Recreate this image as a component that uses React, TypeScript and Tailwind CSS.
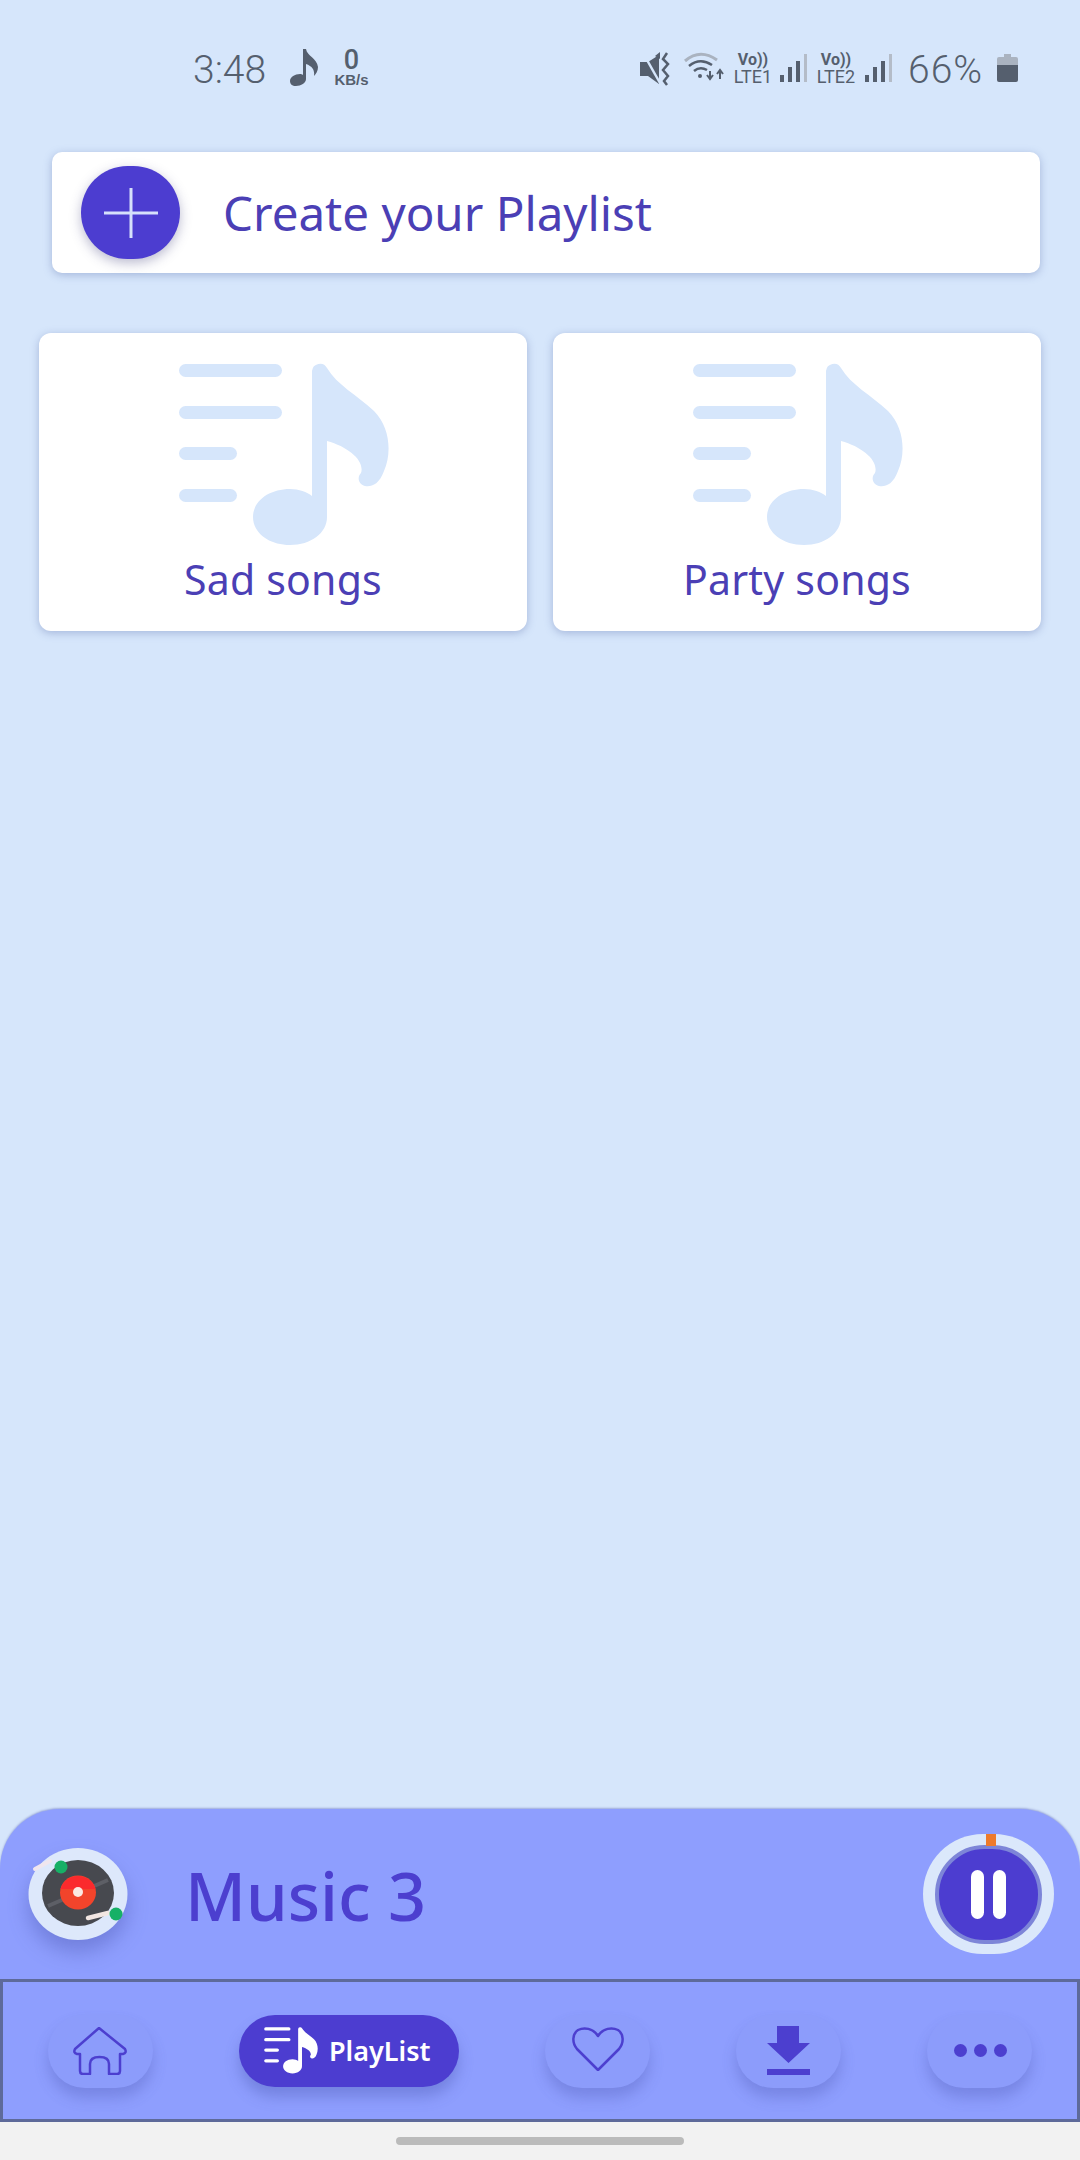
import React from 'react'

const PlaylistIcon = ({ className, fill }: { className: string; fill: string }) => (
  <svg viewBox="0 0 210 184" className={className} fill={fill}>
    <rect x="0" y="1" width="103" height="13" rx="6.5" />
    <rect x="0" y="43" width="103" height="13" rx="6.5" />
    <rect x="0" y="84" width="58" height="13" rx="6.5" />
    <rect x="0" y="126" width="58" height="13" rx="6.5" />
    <path d="M133 8 a8 8 0 0 1 15 -3 C158 22 178 32 195 48 C211 64 213 90 205 108 C200 122 192 124 186 123 C179 121 178 114 182 110 C186 98 170 84 148 78 L148 154 C148 170 132 182 111 182 C90 182 74 170 74 154 C74 138 90 126 111 126 C120 126 128 129 133 133 Z" />
  </svg>
)

const StatusBars = () => (
  <svg viewBox="0 0 28 28" className="w-[28px] h-[28px]">
    <rect x="0" y="21" width="4" height="7" fill="#555f6e" />
    <rect x="8" y="13" width="4" height="15" fill="#555f6e" />
    <rect x="16" y="7" width="4" height="21" fill="#555f6e" />
    <rect x="24" y="0" width="3" height="28" fill="#b4bcc8" />
  </svg>
)

const Lte = ({ label }: { label: string }) => (
  <div className="flex flex-col items-center leading-none text-[#555f6e] font-['Roboto',sans-serif] w-[40px]">
    <span className="text-[16px] font-bold h-[16px]">Vo))</span>
    <span className="text-[18px] font-normal">{label}</span>
  </div>
)

const Disc = () => (
  <svg viewBox="0 0 100 92" className="w-[100px] h-[92px] shrink-0 drop-shadow-[0_12px_10px_rgba(70,80,170,0.4)]">
    <ellipse cx="50" cy="46" rx="49.5" ry="46" fill="#dde8fb" />
    <path d="M7 21 L22 13" stroke="#f0e6ee" strokeWidth="4" strokeLinecap="round" />
    <ellipse cx="50" cy="45" rx="36" ry="33" fill="#47494f" />
    <path d="M20 58 L80 32" stroke="#5d5f66" strokeWidth="4" />
    <ellipse cx="50" cy="44.5" rx="18" ry="17" fill="#f2442b" />
    <path d="M32.5 41 A18 17 0 0 1 67.5 41 Z" fill="#fb2a2d" />
    <circle cx="50" cy="44" r="5" fill="#fbe9e2" />
    <path d="M60 70 L80 65" stroke="#f2e6e2" strokeWidth="4.5" strokeLinecap="round" />
    <circle cx="33" cy="19" r="6.5" fill="#17b066" />
    <circle cx="88" cy="66" r="6.5" fill="#17b066" />
  </svg>
)

const NavPill = ({ children }: { children: React.ReactNode }) => (
  <div className="w-[105px] h-[74px] rounded-[37px] bg-[#8c9cfb] flex items-center justify-center shadow-[0_10px_14px_rgba(70,80,170,0.3)]">
    {children}
  </div>
)

const SongCard = ({ title }: { title: string }) => (
  <div className="h-[298px] bg-white rounded-[12px] flex flex-col items-center pt-[30px] shadow-[0_2px_8px_rgba(90,110,170,0.4)]">
    <PlaylistIcon className="w-[210px] h-[184px] ml-[2px]" fill="#d6e6fb" />
    <span className="mt-[7px] text-[41px] leading-[50px] tracking-[0.2px] text-[#4b3fb5]">{title}</span>
  </div>
)

export default function App() {
  return (
    <div className="w-[1080px] h-[2160px] flex flex-col bg-[#d6e6fb] font-['Noto_Sans',sans-serif]">
      {/* status bar */}
      <div className="h-[152px] shrink-0 flex items-start pt-[46px] text-[#555f6e]">
        <span className="ml-[193px] w-[73px] mt-[2px] text-[39px] leading-[44px] font-light font-['Roboto',sans-serif]">3:48</span>
        <svg viewBox="0 0 28 38" className="ml-[24px] w-[28px] h-[38px] mt-[2px]" fill="#555f6e">
          <path d="M13 1 L16 1 C17 8 27 10 28 19 C28 23 26 26 24 28 C25 22 22 18 16 16 L16 31 C16 35 11 38 6 38 C2 38 0 36 0 33 C0 29 5 26 10 26 C11 26 12 26 13 27 Z" />
        </svg>
        <div className="ml-[15px] w-[37px] flex flex-col items-center leading-none mt-[2px]">
          <span className="text-[27px] h-[24px] leading-[24px] font-medium font-['Roboto',sans-serif]">0</span>
          <span className="text-[15px] font-bold font-['Liberation_Sans',sans-serif]">KB/s</span>
        </div>
        <svg viewBox="0 0 32 34" className="ml-[270px] w-[32px] h-[34px] mt-[6px]" fill="#555f6e">
          <path d="M0 10 L8 10 L19 3 L19 32 L8 24 L0 24 Z" />
          <path d="M3 1 L20 31" stroke="#d6e6fb" strokeWidth="2.5" />
          <path d="M20 7 L15 4 L20 0 Z" />
          <path d="M27 1 L23 7 L28 12 L23 18 L28 24 L24 29 L27 33" fill="none" stroke="#555f6e" strokeWidth="2.5" />
        </svg>
        <svg viewBox="0 0 42 30" className="ml-[12px] w-[42px] h-[30px] mt-[5px]" fill="none">
          <path d="M1 10 Q16 -3 33 9" stroke="#aab3c0" strokeWidth="3" />
          <path d="M5 15 Q16 6 28 14" stroke="#555f6e" strokeWidth="2.5" />
          <path d="M10 20 Q16 15 23 19" stroke="#555f6e" strokeWidth="2.5" />
          <circle cx="16" cy="25" r="2" fill="#555f6e" />
          <path d="M26 20 L26 27 M23 24 L26 28 L29 24 M36 28 L36 20 M33 23 L36 19 L39 23" stroke="#555f6e" strokeWidth="2" />
        </svg>
        <div className="ml-[7px] mt-[6px]"><Lte label="LTE1" /></div>
        <div className="ml-[7px] mt-[8px]"><StatusBars /></div>
        <div className="ml-[8px] mt-[6px]"><Lte label="LTE2" /></div>
        <div className="ml-[9px] mt-[8px]"><StatusBars /></div>
        <span className="ml-[15px] w-[77px] mt-[2px] text-[39px] leading-[44px] font-light tracking-[1px] font-['Roboto',sans-serif]">66%</span>
        <svg viewBox="0 0 21 28" className="ml-[12px] w-[21px] h-[28px] mt-[8px]">
          <path d="M7 0 L14 0 L14 3 L19 3 Q21 3 21 5 L21 11 L0 11 L0 5 Q0 3 2 3 L7 3 Z" fill="#aab3c0" />
          <path d="M0 11 L21 11 L21 26 Q21 28 19 28 L2 28 Q0 28 0 26 Z" fill="#555f6e" />
        </svg>
      </div>

      {/* create playlist */}
      <div className="ml-[52px] w-[988px] h-[121px] shrink-0 bg-white rounded-[10px] flex items-center pl-[29px] shadow-[0_2px_8px_rgba(90,110,170,0.4)]">
        <div className="w-[99px] h-[93px] rounded-full bg-[#4c3dd0] flex items-center justify-center shadow-[0_4px_12px_rgba(60,60,120,0.35)]">
          <svg viewBox="0 0 54 50" className="w-[54px] h-[50px]" stroke="#d6e0fb" strokeWidth="3">
            <path d="M0 25 L54 25 M27 0 L27 50" />
          </svg>
        </div>
        <span className="ml-[43px] text-[47.5px] leading-[60px] text-[#4b3fb5]">Create your Playlist</span>
      </div>

      {/* playlists */}
      <div className="mt-[60px] ml-[39px] w-[1002px] grid grid-cols-2 gap-[26px]">
        <SongCard title="Sad songs" />
        <SongCard title="Party songs" />
      </div>

      <div className="flex-1" />

      {/* player */}
      <div className="h-[170px] shrink-0 rounded-t-[60px] bg-[#8e9efe] flex items-center pl-[28px] pr-[26px] shadow-[0_-1px_2px_rgba(70,80,170,0.4)]">
        <Disc />
        <span className="ml-[57px] mt-[2px] text-[66.5px] leading-[80px] font-medium text-[#4c3fcf]">Music 3</span>
        <div className="relative ml-auto w-[131px] h-[120px] rounded-full bg-[#dbe8fb] flex items-center justify-center">
          <div className="absolute left-[63px] top-0 w-[10px] h-[12px] bg-[#ee7a2b]" />
          <div className="w-[107px] h-[99px] rounded-full bg-[#4c3dd0] border-[4px] border-[#7d85d8] flex items-center justify-center gap-[9px]">
            <div className="w-[13px] h-[49px] rounded-full bg-white" />
            <div className="w-[13px] h-[49px] rounded-full bg-white" />
          </div>
        </div>
      </div>

      {/* bottom nav */}
      <div className="h-[143px] shrink-0 bg-[#8e9efe] border-[3px] border-[#5e6a9a] flex items-center justify-center gap-[86px]">
        <NavPill>
          <svg viewBox="0 0 54 48" className="w-[54px] h-[48px] mr-[2px]" fill="none" stroke="#4c3fcf" strokeWidth="2.5" strokeLinejoin="round">
            <path d="M26 1 L2 22 Q0 26 4 27 L7 27 L7 44 Q7 47 10 47 L17 47 L17 37 Q17 30 26.5 30 Q36 30 36 37 L36 47 L44 47 Q47 47 47 44 L47 27 L50 27 Q54 26 52 22 Z" />
          </svg>
        </NavPill>
        <div className="w-[220px] h-[72px] rounded-[36px] bg-[#4c3dd0] flex items-center pl-[25px] shadow-[0_10px_14px_rgba(70,80,170,0.35)]">
          <PlaylistIcon className="w-[54px] h-[47px]" fill="#ffffff" />
          <span className="ml-[11px] text-[27px] leading-[32px] font-semibold text-white">PlayList</span>
        </div>
        <NavPill>
          <svg viewBox="0 0 52 44" className="w-[52px] h-[44px] mb-[4px]" fill="none" stroke="#4c3fcf" strokeWidth="2.5" strokeLinejoin="round">
            <path d="M26 9 C21 1 12 0 6 3 C0 7 0 16 5 22 L26 43 L47 22 C52 16 52 7 46 3 C40 0 31 1 26 9 Z" />
          </svg>
        </NavPill>
        <NavPill>
          <svg viewBox="0 0 43 49" className="w-[43px] h-[49px]" fill="#4c3fcf">
            <path d="M10 0 L32 0 L32 17 L43 17 L21.5 37 L0 17 L10 17 Z" />
            <rect x="0" y="43" width="43" height="6" />
          </svg>
        </NavPill>
        <NavPill>
          <div className="flex gap-[7px] ml-[2px]">
            <div className="w-[13px] h-[13px] rounded-full bg-[#4c3fcf]" />
            <div className="w-[13px] h-[13px] rounded-full bg-[#4c3fcf]" />
            <div className="w-[13px] h-[13px] rounded-full bg-[#4c3fcf]" />
          </div>
        </NavPill>
      </div>

      {/* home indicator */}
      <div className="h-[38px] shrink-0 bg-[#f2f2f2] flex items-center justify-center">
        <div className="w-[288px] h-[8px] rounded-full bg-[#bbbbbb]" />
      </div>
    </div>
  )
}
